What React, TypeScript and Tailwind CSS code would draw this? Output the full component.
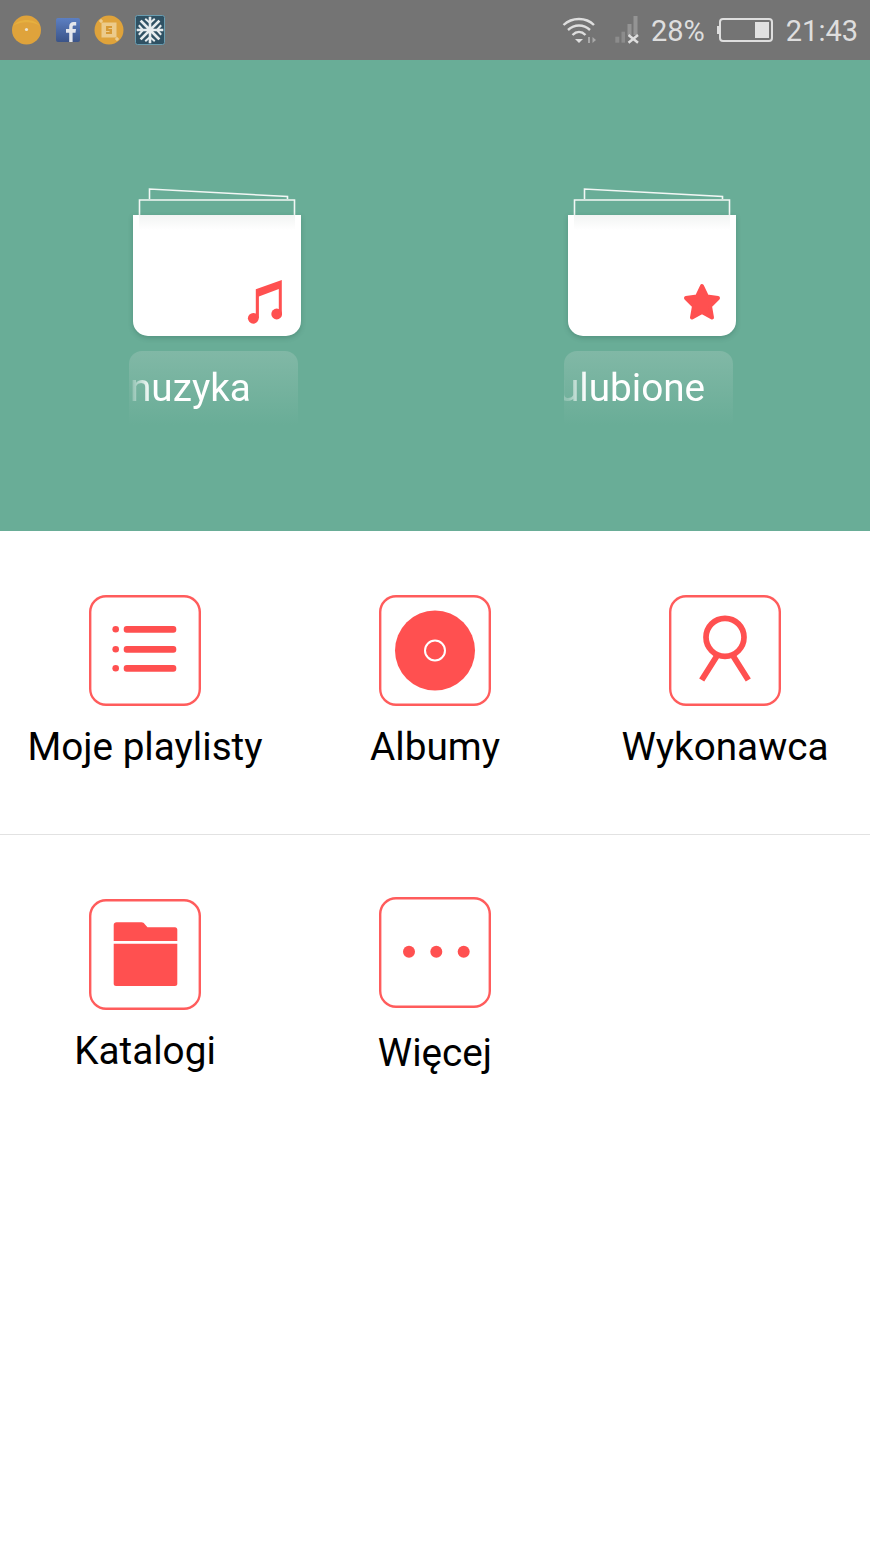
import React from "react";

const RED = "#ff5050";

function IconBox({ children }: { children: React.ReactNode }) {
  return (
    <div className="h-[111px] w-[112px] rounded-[17px] bg-white shadow-[inset_0_0_0_2.4px_#ff5c5c]">
      {children}
    </div>
  );
}

function BoxSvg({ children }: { children: React.ReactNode }) {
  return (
    <svg width="111" height="111" viewBox="0 0 111 111" className="ml-[1px] block">
      {children}
    </svg>
  );
}

function Album({ label, textClass, icon }: { label: string; textClass: string; icon: React.ReactNode }) {
  return (
    <div className="pl-[129px]">
      <div className="w-[173px]">
        <svg width="173" height="27" viewBox="0 0 173 27" className="block" fill="none">
          <path d="M20.5 11V1L158.5 8.5V11" stroke="#f2f7f5" strokeWidth="1.6" />
          <path d="M10.5 27V12H165.5V27" stroke="#f2f7f5" strokeWidth="1.6" />
        </svg>
        <div className="relative ml-[4px] h-[121px] w-[168px] rounded-b-[15px] bg-white shadow-[0_2px_5px_rgba(40,90,75,0.3)]">
          <div className="mx-[6px] h-[15px] bg-gradient-to-b from-[#f2f4f3] to-white" />
          {icon}
        </div>
        <div className="relative mt-[15px] h-[74px] w-[169px] overflow-hidden rounded-t-[13px] bg-gradient-to-b from-[#81b8a6] to-[#69ad97]">
          <div className="pt-[16px] [mask-image:linear-gradient(to_right,rgba(0,0,0,0.25)_4px,#000_22px)]">
            <div className={`whitespace-nowrap font-['Roboto',sans-serif] text-[38.7px] leading-[42px] text-white ${textClass}`}>
              {label}
            </div>
          </div>
        </div>
      </div>
    </div>
  );
}

function StatusIcons() {
  return (
    <div className="flex items-center">
      <svg width="30" height="30" viewBox="0 0 30 30" className="ml-[12px]">
        <circle cx="14.5" cy="15" r="14.5" fill="#dfa33b" />
        <path d="M1 11C8 6 21 6 28 11C22 3 7 3 1 11Z" fill="#e6b03f" />
        <circle cx="14.5" cy="14.5" r="1.6" fill="#ece3cf" />
      </svg>
      <svg width="26" height="26" viewBox="0 0 26 26" className="ml-[13px]">
        <defs>
          <linearGradient id="fb" x1="0" y1="0" x2="0" y2="1">
            <stop offset="0" stopColor="#5c7fc2" />
            <stop offset="1" stopColor="#3b5488" />
          </linearGradient>
        </defs>
        <rect x="1" y="1" width="24" height="24" rx="2" fill="url(#fb)" />
        <path
          d="M14.2 25V15.7H11V12H14.2V9.6C14.2 6.6 16 5 18.6 5C19.8 5 20.9 5.1 21.2 5.1V8.4H19.3C17.9 8.4 17.6 9.1 17.6 10V12H21L20.5 15.7H17.6V25Z"
          fill="#e4e6ec"
        />
      </svg>
      <svg width="30" height="30" viewBox="0 0 30 30" className="ml-[13px]">
        <circle cx="15" cy="15" r="14.5" fill="#dfa33b" />
        <rect x="7.5" y="7.5" width="15" height="15" fill="#eccb8b" />
        <path d="M12 11H18V13H14.5V14H18V19H12V17H15.5V16H12Z" fill="#d79a35" />
        <path d="M7 4V8M5 6H9M23 22V26M21 24H25" stroke="#f0d9ac" strokeWidth="1" />
      </svg>
      <svg width="30" height="30" viewBox="0 0 30 30" className="ml-[11px]">
        <rect x="0.5" y="0.5" width="29" height="29" rx="2" fill="#2f5163" stroke="#6a9db0" />
        <g stroke="#e6ecee" strokeWidth="2.6" fill="none" strokeLinecap="square">
          <path d="M15 3V27M3 15H27M6.5 6.5L23.5 23.5M23.5 6.5L6.5 23.5" />
          <path d="M11 4.5L15 8L19 4.5M11 25.5L15 22L19 25.5M4.5 11L8 15L4.5 19M25.5 11L22 15L25.5 19" strokeWidth="2" />
        </g>
      </svg>
    </div>
  );
}

function StatusRight() {
  return (
    <div className="flex items-center font-['Roboto',sans-serif] text-[29px] leading-[34px] text-[#dedede]">
      <svg width="36" height="28" viewBox="0 0 36 28" className="mr-[16px]" fill="none">
        <path d="M1.5 9C10 1 24 1 32 9" stroke="#dedede" strokeWidth="2.4" />
        <path d="M6 14C12.5 8 21.5 8 28 14" stroke="#dedede" strokeWidth="2.4" />
        <path d="M10.5 19C14.5 15 19.5 15 23.5 19" stroke="#dedede" strokeWidth="2.4" />
        <path d="M13 23H21L17 27Z" fill="#dedede" />
        <path d="M26 27V21H28V27ZM30.5 21L34 24L30.5 27Z" fill="#a9a9a9" />
      </svg>
      <svg width="26" height="28" viewBox="0 0 26 28" className="mr-[11px]" fill="none">
        <rect x="1.3" y="20.7" width="4" height="6" fill="#8c8c8c" />
        <rect x="7.5" y="15.7" width="3.5" height="11" fill="#8c8c8c" />
        <rect x="13.5" y="8" width="4" height="11" fill="#949494" />
        <rect x="19.5" y="0" width="4" height="19" fill="#949494" />
        <path d="M14.5 19L24 26.7M24 19L14.5 26.7" stroke="#dedede" strokeWidth="2.5" />
      </svg>
      <span className="pt-[2px]">28%</span>
      <svg width="56" height="26" viewBox="0 0 56 26" className="ml-[12px] mr-[13px]" fill="none">
        <rect x="0" y="9" width="2" height="8" fill="#dedede" />
        <rect x="3" y="2" width="52" height="22" rx="3" stroke="#dedede" strokeWidth="2" />
        <rect x="38" y="5" width="14" height="16" fill="#e2e2e2" />
      </svg>
      <span className="mr-[12px] pt-[2px]">21:43</span>
    </div>
  );
}

export default function App() {
  return (
    <div className="flex h-[1548px] w-[870px] flex-col overflow-hidden bg-white font-['Roboto',sans-serif]">
      <header className="flex h-[60px] items-center justify-between bg-[#747474]">
        <StatusIcons />
        <StatusRight />
      </header>

      <section className="grid h-[471px] grid-cols-2 bg-[#69ad97] pt-[128px]">
        <Album
          label="nuzyka"
          textClass="ml-[1px]"
          icon={
            <svg width="36" height="46" viewBox="0 0 36 46" className="absolute left-[113px] top-[63px]" fill={RED}>
              <circle cx="7.3" cy="40.3" r="5.4" />
              <circle cx="30.7" cy="36" r="5.4" />
              <path d="M9.8 40V11.2L35.8 2V36H32.8V11L12.9 18.4V40Z" />
            </svg>
          }
        />
        <Album
          label="ulubione"
          textClass="-ml-[6px]"
          icon={
            <svg width="40" height="40" viewBox="0 0 40 40" className="absolute left-[114px] top-[67px]">
              <polygon
                points="20,4 25,14.5 36,16 28,24 30,35.5 20,30 10,35.5 12,24 4,16 15,14.5"
                fill={RED}
                stroke={RED}
                strokeWidth="4"
                strokeLinejoin="round"
              />
            </svg>
          }
        />
      </section>

      <section className="grid h-[304px] grid-cols-3 border-b border-[#e2e2e2] pt-[64px] text-[38.7px] leading-[42px] text-black">
        <div className="flex flex-col items-center">
          <IconBox>
            <BoxSvg>
              <g fill={RED}>
                <circle cx="25.7" cy="34.3" r="3.3" />
                <circle cx="25.7" cy="54.3" r="3.3" />
                <circle cx="25.7" cy="73.3" r="3.3" />
                <rect x="33.7" y="31" width="52.6" height="6.7" rx="3" />
                <rect x="33.7" y="51" width="52.6" height="6.7" rx="3" />
                <rect x="33.7" y="70" width="52.6" height="6.7" rx="3" />
              </g>
            </BoxSvg>
          </IconBox>
          <span className="mt-[20px] whitespace-nowrap">Moje playlisty</span>
        </div>
        <div className="flex flex-col items-center">
          <IconBox>
            <BoxSvg>
              <circle cx="55" cy="55.5" r="40" fill={RED} />
              <circle cx="55" cy="55.5" r="10" fill="none" stroke="#ffffff" strokeWidth="2" />
            </BoxSvg>
          </IconBox>
          <span className="mt-[20px] whitespace-nowrap">Albumy</span>
        </div>
        <div className="flex flex-col items-center">
          <IconBox>
            <BoxSvg>
              <circle cx="55" cy="42.3" r="19" fill="none" stroke={RED} strokeWidth="5.7" />
              <path d="M47.5 60L31.7 85M62.5 60L78.3 85" fill="none" stroke={RED} strokeWidth="6" />
            </BoxSvg>
          </IconBox>
          <span className="mt-[20px] whitespace-nowrap">Wykonawca</span>
        </div>
      </section>

      <section className="grid grid-cols-3 pt-[62px] text-[38.7px] leading-[42px] text-black">
        <div className="flex flex-col items-center pt-[2px]">
          <IconBox>
            <BoxSvg>
              <g fill={RED}>
                <path d="M23.7 42V26C23.7 24.3 25 23.3 26.5 23.3H51.5C53 23.3 54 24 55 25.5L57.5 28.3H85C86.4 28.3 87.3 29.3 87.3 30.6V42Z" />
                <path d="M23.7 44.7H87.3V84.7C87.3 86 86.3 87 85 87H26C24.7 87 23.7 86 23.7 84.7Z" />
              </g>
            </BoxSvg>
          </IconBox>
          <span className="mt-[20px] whitespace-nowrap">Katalogi</span>
        </div>
        <div className="flex flex-col items-center">
          <IconBox>
            <BoxSvg>
              <g fill={RED}>
                <circle cx="29" cy="54.7" r="6" />
                <circle cx="56.3" cy="54.7" r="6" />
                <circle cx="83.7" cy="54.7" r="6" />
              </g>
            </BoxSvg>
          </IconBox>
          <span className="mt-[24px] whitespace-nowrap">Więcej</span>
        </div>
      </section>
    </div>
  );
}
